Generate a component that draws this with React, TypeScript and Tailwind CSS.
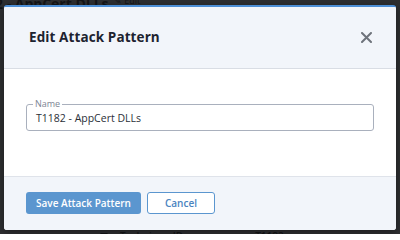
export default function App() {
  return (
    <div
      className="relative w-[400px] h-[234px] overflow-hidden bg-[#2e2f31] pt-[5px] px-[4px]"
      style={{ fontFamily: '"Open Sans", "Noto Sans", sans-serif' }}
    >
      {/* dimmed page behind the dialog */}
      <div className="absolute left-[-5px] top-[-7px] text-[14px] font-bold text-[#141517] whitespace-nowrap">
        2 - AppCert DLLs
      </div>
      <div className="absolute left-[114px] top-[-6px] text-[9px] text-[#141517] whitespace-nowrap">
        ✎ Edit
      </div>
      <div className="absolute left-[100px] top-[229px] flex items-center gap-[12px] text-[10px] font-semibold text-[#141517] whitespace-nowrap">
        <span className="w-[8px] h-[8px] border-[1.5px] border-[#141517] rounded-[1px]" />
        <span>Technique ID</span>
        <span className="ml-[60px]">T1182</span>
      </div>

      {/* dialog */}
      <div className="relative flex flex-col h-[225px] rounded-[3px] overflow-hidden border-t-2 border-[#4d8fd6] bg-white shadow-[0_2px_8px_rgba(0,0,0,0.4)]">
        <div className="flex items-center justify-between h-[62px] bg-[#f2f5fa] border-b border-[#d9dde4] pl-[25px] pr-[24px] shrink-0">
          <h2 className="text-[13.5px] font-bold text-[#1d2330] tracking-[0.1px]">Edit Attack Pattern</h2>
          <svg width="11" height="11" viewBox="0 0 11 11" className="mb-[1px]">
            <path d="M1 1L10 10M10 1L1 10" stroke="#6e737b" strokeWidth="2" strokeLinecap="round" />
          </svg>
        </div>

        <div className="flex-1 bg-white px-[22px] pt-[35px]">
          <div className="relative h-[27px] border border-[#a9b0bd] rounded-[3px] flex items-center pl-[9px]">
            <span className="absolute left-[6px] top-[-7px] bg-white px-[2px] text-[9px] leading-[12px] text-[#7d8594]">
              Name
            </span>
            <span className="text-[10.5px] text-[#2a2f38] pt-[2px]">T1182 - AppCert DLLs</span>
          </div>
        </div>

        <div className="flex items-center gap-[6px] h-[54px] bg-[#f2f5fa] border-t border-[#dfe3ea] px-[22px] pb-[1px] shrink-0">
          <button className="w-[115px] h-[22px] rounded-[3px] bg-[#5b96cf] text-white text-[10px] font-semibold">
            Save Attack Pattern
          </button>
          <button className="w-[68px] h-[22px] rounded-[3px] bg-white border-[1.5px] border-[#5b96cf] text-[#4a84bf] text-[10px] font-semibold">
            Cancel
          </button>
        </div>
      </div>
    </div>
  );
}
